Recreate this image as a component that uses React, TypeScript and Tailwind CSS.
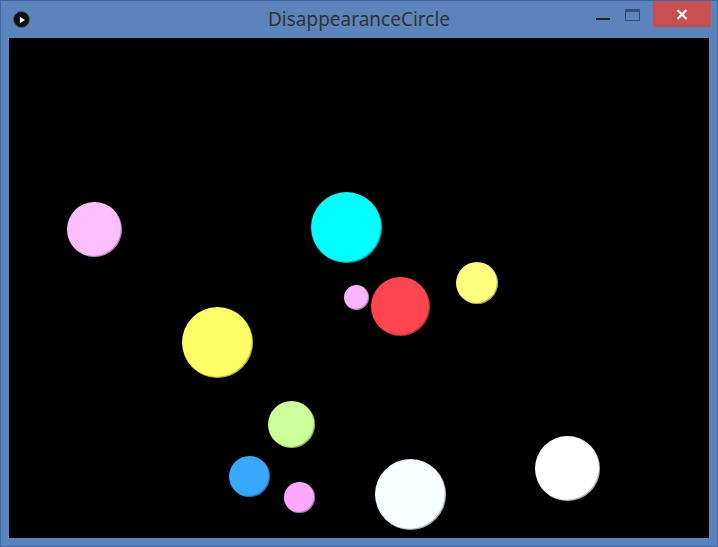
const circles = [
  { x: 58, y: 164, d: 55, color: "#ffbfff" },
  { x: 302, y: 154, d: 71, color: "#00ffff" },
  { x: 335, y: 247, d: 25, color: "#ffb4ff" },
  { x: 362, y: 239, d: 59, color: "#ff4650" },
  { x: 447, y: 224, d: 42, color: "#ffff80" },
  { x: 173, y: 269, d: 71, color: "#ffff66" },
  { x: 259, y: 363, d: 47, color: "#ccff99" },
  { x: 220, y: 418, d: 41, color: "#3aa8ff" },
  { x: 275, y: 444, d: 31, color: "#ffa8ff" },
  { x: 366, y: 421, d: 71, color: "#f8ffff" },
  { x: 526, y: 398, d: 65, color: "#ffffff" },
];

export default function App() {
  return (
    <div className="w-[718px] h-[547px] bg-[#5b84bd] border border-[#3f6aa6] flex flex-col font-['Noto_Sans','Open_Sans',sans-serif]">
      {/* title bar */}
      <div className="relative h-[37px] flex items-start shrink-0">
        <div className="ml-[12px] mt-[10px] w-[17px] h-[17px] rounded-full bg-[#111] border border-[#555] flex items-center justify-center">
          <svg width="8" height="8" viewBox="0 0 8 8">
            <path d="M2 1 L7 4 L2 7 Z" fill="#fff" />
          </svg>
        </div>
        <div className="absolute left-0 right-0 top-[6px] text-center text-[19px] leading-[24px] text-[#333] pointer-events-none">
          DisappearanceCircle
        </div>
        <div className="ml-auto flex items-start">
          <div className="w-[32px] h-[26px] flex items-center justify-center">
            <div className="mt-[10px] w-[14px] h-[2px] bg-[#222]" />
          </div>
          <div className="w-[26px] h-[26px] flex items-center justify-center">
            <div className="mt-[1px] w-[15px] h-[12px] border border-[#34507a] border-t-[3px]" />
          </div>
          <div className="ml-[8px] mr-[6px] w-[58px] h-[26px] bg-[#c75050] flex items-center justify-center">
            <svg width="12" height="11" viewBox="0 0 12 11">
              <path d="M1.5 1 L10.5 10 M10.5 1 L1.5 10" stroke="#fff" strokeWidth="2.2" />
            </svg>
          </div>
        </div>
      </div>
      {/* canvas */}
      <div className="ml-[8px] w-[700px] h-[500px] bg-black relative overflow-hidden">
        {circles.map((c, i) => (
          <div
            key={i}
            className="absolute rounded-full shadow-[inset_-1px_-1px_1px_rgba(0,0,0,0.35)]"
            style={{ left: c.x, top: c.y, width: c.d, height: c.d, backgroundColor: c.color }}
          />
        ))}
      </div>
    </div>
  );
}
